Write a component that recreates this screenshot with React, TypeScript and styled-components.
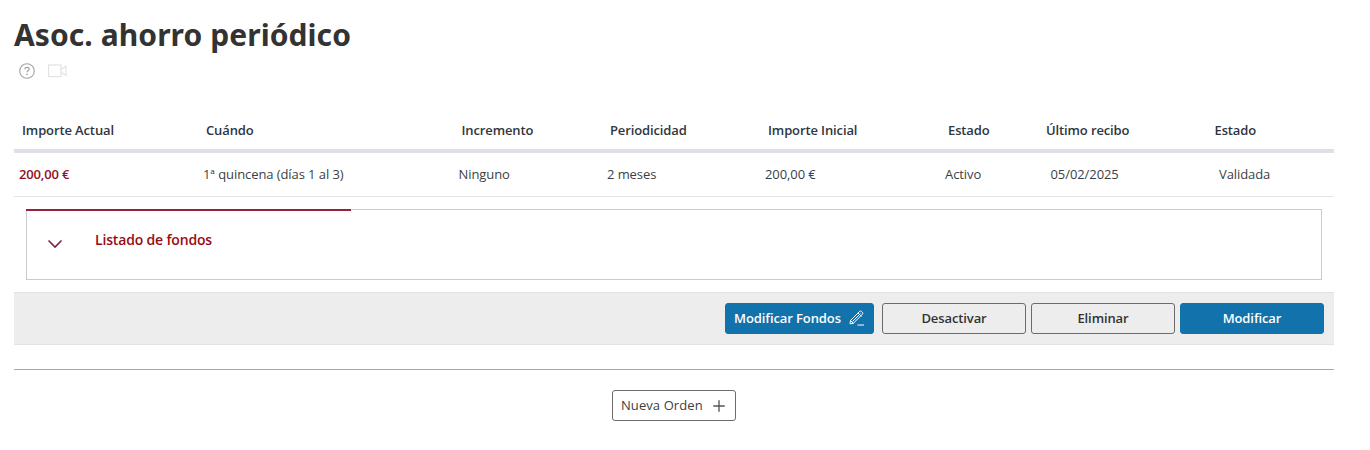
import React from "react";
import styled, { createGlobalStyle } from "styled-components";
import { Plus } from "lucide-react";

const GlobalStyle = createGlobalStyle`
  html, body {
    margin: 0;
    padding: 0;
    background: #fff;
    font-family: "Open Sans", "Noto Sans", sans-serif;
    color: #333;
  }
`;

const Page = styled.div`
  width: 1320px;
  padding: 0 36px 0 14px;
`;

const Title = styled.h1`
  margin: 0;
  padding-top: 16px;
  font-family: "Noto Sans", sans-serif;
  font-size: 30px;
  line-height: 38px;
  font-weight: 700;
  letter-spacing: 0.07px;
  color: #333;
`;

const IconRow = styled.div`
  display: flex;
  align-items: center;
  gap: 13px;
  height: 20px;
  margin: 7px 0 0 5px;
`;

const columns = "184px 255.5px 148.5px 158px 180px 98px 168.5px 127.5px";

const HeadRow = styled.div`
  display: grid;
  grid-template-columns: ${columns};
  align-items: center;
  height: 39px;
  margin-top: 29px;
  border-bottom: 4px solid #dfe0e6;
`;

const HeadCell = styled.div`
  padding-left: 8px;
  font-size: 13px;
  font-weight: 600;
  letter-spacing: -0.12px;
  color: #2f3640;
`;

const DataRow = styled.div`
  display: grid;
  grid-template-columns: ${columns};
  align-items: center;
  height: 43px;
  border-bottom: 1px solid #e4e5e9;
`;

const DataCell = styled.div<{ $inset?: number; $accent?: boolean }>`
  padding-left: ${(p) => p.$inset ?? 5}px;
  margin-top: -2px;
  font-size: 13px;
  letter-spacing: ${(p) => (p.$accent ? "-0.17px" : "-0.08px")};
  color: ${(p) => (p.$accent ? "#8f0f1e" : "#3b3f45")};
  font-weight: ${(p) => (p.$accent ? 600 : 400)};
`;

const Panel = styled.div`
  position: relative;
  display: flex;
  align-items: flex-start;
  height: 69px;
  margin: 12px 12px 0;
  border: 1px solid #cbcbcb;
`;

const PanelAccent = styled.div`
  position: absolute;
  top: -1px;
  left: -1px;
  width: 325px;
  height: 2px;
  background: #93233f;
`;

const Chevron = styled.svg`
  margin: 29px 0 0 20px;
`;

const PanelTitle = styled.div`
  margin: 20px 0 0 32px;
  font-size: 14px;
  line-height: 20px;
  font-weight: 600;
  letter-spacing: -0.17px;
  color: #990a14;
`;

const ActionBar = styled.div`
  display: flex;
  justify-content: flex-end;
  gap: 5px;
  height: 53px;
  box-sizing: border-box;
  margin-top: 12px;
  padding: 10px 10px 0 0;
  background: #ededed;
  border-top: 1px solid #e2e2e2;
  border-bottom: 1px solid #e2e2e2;
`;

const Button = styled.button<{ $primary?: boolean; $gapBefore?: boolean }>`
  display: inline-flex;
  align-items: center;
  justify-content: center;
  gap: 8px;
  width: 144px;
  height: 31px;
  padding: 0 0 2px;
  margin-left: ${(p) => (p.$gapBefore ? "3px" : "0")};
  border-radius: 3px;
  border: 1px solid ${(p) => (p.$primary ? "#1272ab" : "#6b6b6b")};
  background: ${(p) => (p.$primary ? "#1272ab" : "transparent")};
  color: ${(p) => (p.$primary ? "#fff" : "#333")};
  font-family: inherit;
  font-size: 13px;
  font-weight: 600;
  letter-spacing: -0.1px;
`;

const FundsButton = styled(Button)`
  width: 149px;
`;

const Divider = styled.div`
  margin-top: 24px;
  border-top: 1px solid #a8a8a8;
`;

const NewRow = styled.div`
  display: flex;
  justify-content: center;
  margin-top: 20px;
`;

const NewButton = styled.button`
  display: inline-flex;
  align-items: center;
  gap: 7px;
  width: 124px;
  height: 31px;
  padding: 0 7px 2px 8px;
  background: #fff;
  border: 1px solid #6b6b6b;
  border-radius: 3px;
  color: #3b3f45;
  font-family: inherit;
  font-size: 13px;
  font-weight: 500;
  letter-spacing: 0.08px;
  white-space: nowrap;
`;

const PlusIcon = styled(Plus)`
  flex: none;
  margin-top: 2px;
  color: #555;
`;

const heads = [
  "Importe Actual",
  "Cuándo",
  "Incremento",
  "Periodicidad",
  "Importe Inicial",
  "Estado",
  "Último recibo",
  "Estado",
];

export default function App() {
  return (
    <Page>
      <GlobalStyle />
      <Title>Asoc. ahorro periódico</Title>
      <IconRow>
        <svg width="16" height="16" viewBox="0 0 16 16" fill="none">
          <circle cx="8" cy="8" r="7.3" stroke="#a3a3a3" strokeWidth="1.1" />
          <path
            d="M5.900 6.300c0-1.200 1-1.900 2.100-1.900s2.100.7 2.100 1.800c0 1.600-2.100 1.600-2.100 3.100"
            stroke="#a3a3a3"
            strokeWidth="1.2"
          />
          <circle cx="8" cy="11.4" r=".8" fill="#a3a3a3" />
        </svg>
        <svg width="19" height="14" viewBox="0 0 19 14" fill="none">
          <rect x=".6" y="1" width="12.4" height="11.6" stroke="#e3e3e5" strokeWidth="1.2" />
          <path d="M13 5.600l5-3.400v9.200l-5-3.400" stroke="#e3e3e5" strokeWidth="1.2" />
        </svg>
      </IconRow>

      <HeadRow>
        {heads.map((h, i) => (
          <HeadCell key={i}>{h}</HeadCell>
        ))}
      </HeadRow>
      <DataRow>
        <DataCell $accent>200,00 €</DataCell>
        <DataCell>1ª quincena (días 1 al 3)</DataCell>
        <DataCell>Ninguno</DataCell>
        <DataCell>2 meses</DataCell>
        <DataCell>200,00 €</DataCell>
        <DataCell>Activo</DataCell>
        <DataCell $inset={12.5}>05/02/2025</DataCell>
        <DataCell $inset={12.5}>Validada</DataCell>
      </DataRow>

      <Panel>
        <PanelAccent />
        <Chevron width="16" height="10" viewBox="0 0 16 10" fill="none">
          <path d="M1.500 1.500L8 8l6.500-6.500" stroke="#7d2348" strokeWidth="1.6" />
        </Chevron>
        <PanelTitle>Listado de fondos</PanelTitle>
      </Panel>

      <ActionBar>
        <FundsButton $primary>
          Modificar Fondos
          <svg width="16" height="16" viewBox="0 0 16 16" fill="none" stroke="#fff" strokeWidth="1">
            <path d="M1.500 10.500L10.500 1.500a1.500 1.500 0 0 1 2.100 0l.7.7a1.500 1.500 0 0 1 0 2.100L4.300 13.300l-3.300.5z" />
            <path d="M3.500 11.500L11.500 3.500M1.500 10.500l3 3M9 3l3.500 3.500" />
            <path d="M8.500 15h6.500" />
          </svg>
        </FundsButton>
        <Button $gapBefore>Desactivar</Button>
        <Button>Eliminar</Button>
        <Button $primary>Modificar</Button>
      </ActionBar>

      <Divider />
      <NewRow>
        <NewButton>
          Nueva Orden
          <PlusIcon size={18} strokeWidth={1.8} />
        </NewButton>
      </NewRow>
    </Page>
  );
}
